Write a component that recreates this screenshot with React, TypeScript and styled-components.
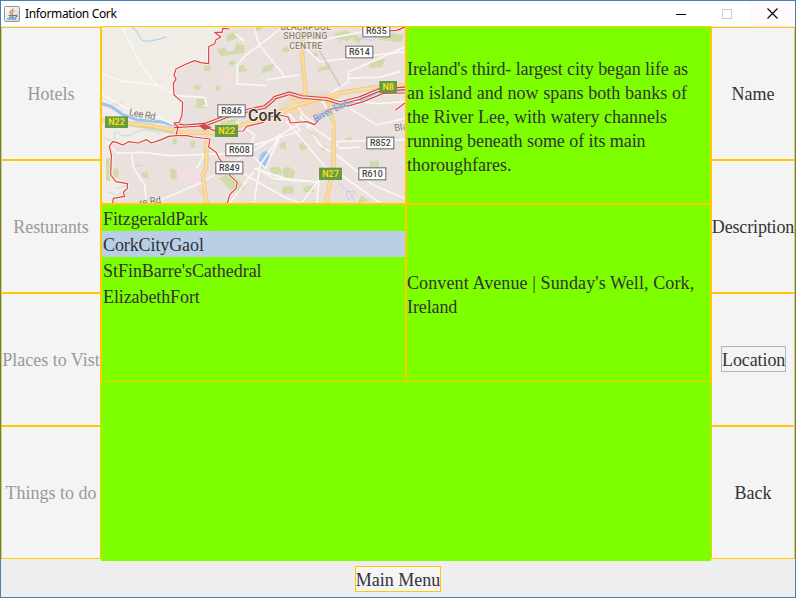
import React from 'react';
import styled, { createGlobalStyle } from 'styled-components';

const GlobalStyle = createGlobalStyle`
  * { box-sizing: border-box; }
  body { margin: 0; }
`;

const Window = styled.div`
  width: 796px;
  height: 598px;
  border: 1px solid #4a7fb5;
  background: #eeeeee;
  display: flex;
  flex-direction: column;
  overflow: hidden;
  font-family: 'Liberation Serif', 'Times New Roman', serif;
  font-size: 18px;
  line-height: 24px;
  color: #333333;
`;

const TitleBar = styled.header`
  height: 25px;
  flex: none;
  display: flex;
  align-items: center;
  background: #ffffff;
  padding-left: 3px;
`;

const Title = styled.h1`
  margin: 0 0 0 5px;
  flex: 1;
  font: 400 12px/24px 'Noto Sans', 'Open Sans', sans-serif;
  letter-spacing: -0.36px;
  color: #000000;
`;

const WindowControl = styled.button<{ $hot?: boolean }>`
  width: ${(p) => (p.$hot ? 45 : 46)}px;
  height: 25px;
  padding: 0;
  border: 0;
  display: flex;
  align-items: center;
  justify-content: center;
  background: ${(p) => (p.$hot ? '#fffafb' : 'transparent')};
`;

const Body = styled.main`
  height: 535px;
  flex: none;
  display: grid;
  grid-template-columns: 100px 610px 84px;
`;

const ButtonColumn = styled.nav`
  display: grid;
  grid-template-rows: repeat(4, 133px);
  border-top: 1px solid #e4e9ef;
`;

const PanelButton = styled.button<{ $spacing?: number }>`
  min-width: 0;
  padding: 1px 0 0;
  border: 1px solid #ffc800;
  background: #f4f4f4;
  color: #333333;
  font: inherit;
  letter-spacing: ${(p) => p.$spacing ?? 0}px;
  white-space: nowrap;
  display: flex;
  align-items: center;
  justify-content: center;

  &:disabled { color: #999999; }
`;

const FocusLabel = styled.span`
  width: 65px;
  height: 26px;
  border: 1px solid #a3b8cc;
  margin: -2px 0 0 1px;
  padding-top: 1px;
  letter-spacing: -0.1px;
`;

const Center = styled.section`
  display: grid;
  grid-template: 178px 178px 179px / 305px 305px;
  background: #7dff00;
`;

const Cell = styled.div`
  border: 1px solid #ffc800;
  overflow: hidden;
`;

const TextCell = styled(Cell)`
  display: flex;
  align-items: center;
  padding-top: 4px;
`;

const Line = styled.span<{ $spacing?: number }>`
  display: block;
  white-space: nowrap;
  letter-spacing: ${(p) => p.$spacing ?? 0}px;
`;

const PlaceList = styled.ul`
  margin: 0;
  padding: 0;
  list-style: none;
`;

const PlaceRow = styled.li<{ $selected?: boolean; $spacing: number }>`
  height: 26px;
  padding: 2px 1px 0;
  letter-spacing: ${(p) => p.$spacing}px;
  background: ${(p) => (p.$selected ? '#b8cfe5' : 'transparent')};
`;

const Footer = styled.footer`
  display: flex;
  justify-content: center;
  padding-top: 5px;
`;

const MenuButton = styled(PanelButton)`
  width: 86px;
  height: 26px;
  padding-top: 2px;
`;

const MapSvg = styled.svg`
  display: block;
  font-family: Roboto, sans-serif;
`;

type Badge = { x: number; y: number; w: number; h: number; label: string };

const regional: Badge[] = [
  { x: 787, y: -4, w: 84, h: 41, label: 'R635' },
  { x: 736, y: 62, w: 84, h: 38, label: 'R614' },
  { x: 352, y: 238, w: 85, h: 39, label: 'R846' },
  { x: 376, y: 355, w: 84, h: 39, label: 'R608' },
  { x: 346, y: 409, w: 84, h: 39, label: 'R849' },
  { x: 799, y: 335, w: 84, h: 38, label: 'R852' },
  { x: 775, y: 427, w: 84, h: 39, label: 'R610' },
];

const national: Badge[] = [
  { x: 15, y: 274, w: 69, h: 35, label: 'N22' },
  { x: 345, y: 300, w: 69, h: 36, label: 'N22' },
  { x: 838, y: 168, w: 53, h: 36, label: 'N8' },
  { x: 657, y: 428, w: 69, h: 37, label: 'N27' },
];

const parks = [
  'M380 30l30-12 2 22-30 10z', 'M350 72l24-4 8 14 22-6 4-22 26 8v22l-72 10z', 'M385 112l18-8 4 12-14 6z',
  'M312 122l18-2 2 18h-20z', 'M280 180l25 2-8 14-18-4z', 'M290 222l29-2-2 28h-28z', 'M415 130l12-14 16 22-26 4z',
  'M350 176l14 16-18 8z', 'M548 72l12-8 12 14-24 6z', 'M490 125l34-10-8 22-34 8z', 'M640 82h12v16h-12z',
  'M655 128l34-10 4 14-38 8z', 'M806 116l50-16-10 26-34 4z', 'M460 6h30l-8 12h-22z',
  'M622 24l40 8-6 10-34-8z', 'M700 26l40-10 22 18-20 14-36-8z', 'M760 26l26 14-8 16-20-10z', 'M838 38l42-14 32 8-10 20-64-8z',
  'M95 292l120 14 10 22-70-14-70-10z', 'M360 292l50-12 8 28-50 6z', 'M680 234l30-14 22 18-38 12z',
  'M218 342l12-6 2 18-14 8z', 'M270 347h15v22h-13z', 'M42 430l14 2v25l-18 2z', 'M124 444l18-4 6 22-22-6z',
  'M210 430l20 4v30l-18-4z', 'M356 458l40-12 40 42-38 16z',
  'M538 357l20-8v25l-18-4z', 'M595 360l14-8 16 14-20 14z', 'M664 360l18 4-6 14-12-4z', 'M510 428l28-4 10 22-36 2z',
  'M548 432l16-8 22 16-6 22-30-4z', 'M807 410l30-4v20l-26 2z', 'M734 340l20-4 4 10-20 4z', 'M610 486l30-6 2 22-32-2z',
  'M782 510l26 18-34 6z', 'M548 484h32v22h-34z', 'M18 400l12 2v66l-12-2z',
];

const minorRoads = [
  'M66 6L122 118 172 182', 'M6 146L70 170 110 172 172 182 224 206', 'M6 208L80 250 180 278 222 300',
  'M232 212L314 218 320 240 310 244', 'M438 90L412 120V176L434 180', 'M408 176L500 182', 'M438 90L478 60 556 156',
  'M462 6L478 60', 'M404 24L432 48', 'M478 60L530 20 550 6', 'M500 164L596 150', 'M566 6L640 50 790 20',
  'M604 60L660 110 915 80', 'M686 210L744 170 746 140 915 66', 'M746 160L840 156 900 140', 'M915 230L830 236 680 220',
  'M20 350L50 384 130 382 210 392 380 386 600 318', 'M94 384L102 430 134 480 138 520', 'M170 530L310 470 420 400 540 330 610 290',
  'M330 360L290 430', 'M408 290L464 330 450 370', 'M456 390L496 430 540 334', 'M540 333L480 420 462 534',
  'M470 430L520 460 618 470', 'M462 430L554 460 656 472', 'M560 290L612 350 680 430', 'M600 270L660 360 730 405 820 480 915 520',
  'M600 280L700 350 915 344', 'M694 340L720 370 780 366', 'M750 250L830 300 915 280', 'M664 222L690 270 700 330',
  'M660 436L650 534', 'M660 460L605 534', 'M724 450L840 534', 'M460 440L390 534', 'M420 440L560 520 600 534',
  'M550 250L580 280 600 320', 'M590 240L610 270 650 300',
];

const mainRed = 'M222 298L254 304 316 299 380 274 450 255 494 246 520 224 524 218 568 205 606 216 680 222 720 234 780 219 834 196 915 190';
const rings = [
  'M388 12L368 10 366 22 344 22 362 36 348 44 344 56 326 65 326 116 302 113 284 107 252 120 228 132 222 150 228 162 220 176 222 210 248 232 246 270 238 292 222 294 234 306 228 332 206 334 184 344 154 354 140 344 114 354 86 350 68 360 50 352 38 350 28 364 34 390 32 450 48 470 82 476 82 490 70 502 74 514 40 520 38 534',
  'M230 332L260 332 280 336 330 342 326 366 348 382 360 404 384 430 390 452 412 472 408 490 390 508 382 534',
  'M222 308L310 303 350 320 430 318 440 304 490 292 510 276 540 270 564 276 572 294 620 290 644 299 652 290 660 270 684 254 748 242 790 230 850 205 915 204',
  'M860 18L890 16 915 6', 'M886 256L915 234',
];

function CorkMap() {
  return (
    <MapSvg width="303" height="176" viewBox="6 6 909 528" role="img" aria-label="Map of Cork">
      <rect x="6" y="6" width="909" height="528" fill="#eae0dd" />
      <path fill="#efede5" d="M6 6H380L366 22 344 22 362 36 326 65 326 116 284 107 228 132 222 150 220 176 222 210 248 232 238 292 234 306 228 332 154 354 114 354 38 350 28 364 32 450 82 476 82 490 38 534H6z" />
      <path fill="#f1dfe1" d="M348 160L400 134 402 164 378 184zM230 438l80-10-4 54-64-20zM712 382h20v40l-20 10z" />
      <path fill="#e3ded5" d="M30 238l40-10-14 16zM540 240l50-42 140 2-40 45-60 20-20 25-50-10z" />
      <path fill="#ecd9c8" d="M536 248l36-28 90-12 42 20-20 26-54 28-14-14-46 6zM288 492l30-14 6 56z" />
      <g fill="#d1dba9">{parks.map((d) => <path key={d} d={d} />)}</g>
      <g fill="none" stroke="#a9cbed" strokeWidth="3">
        <path d="M96 6Q112 16 118 34T150 48 200 36" />
        <path d="M50 320Q70 344 104 324T180 326M12 338l30 12 4-30M20 500l32 10 26-18M102 422l24-1M50 490l30-8" strokeWidth="2" />
        <path d="M710 40l18 16M780 40l38 6 16-12M718 478l28 20 18 30M738 500h28l-20 26z" strokeWidth="2" />
      </g>
      <path d="M6 236L34 245 70 270 110 284 180 290 224 302" fill="none" stroke="#9ac4ef" strokeWidth="9" strokeLinejoin="round" />
      <path d="M648 290L670 262 706 244 786 222 838 200 915 193" fill="none" stroke="#a6d0f4" strokeWidth="13" strokeLinejoin="round" />
      <path d="M477 412C477 390 488 377 500 379 514 381 509 405 503 420 496 433 477 432 477 412z" fill="#a1c3ec" />
      <g fill="none" stroke="#faf7f4" strokeWidth="5" strokeLinejoin="round">
        {minorRoads.map((d) => <path key={d} d={d} />)}
      </g>
      <path d="M658 76L722 186" stroke="#cbc5c2" strokeWidth="4" />
      <g fill="none" strokeLinejoin="round" strokeLinecap="round">
        <g stroke="#e8c58c" strokeWidth="13">
          <path d="M6 286L160 303 250 322 350 324 470 286 530 264 606 236 720 204 840 185 915 181" />
          <path d="M608 6L606 90 612 150 618 208 580 218" />
          <path d="M320 340L318 430 308 450 320 534M688 222L694 275 702 300 700 420 678 534" />
        </g>
        <g stroke="#fadb9b" strokeWidth="9">
          <path d="M6 286L160 303 250 322 350 324 470 286 530 264 606 236 720 204 840 185 915 181" />
          <path d="M608 6L606 90 612 150 618 208 580 218" />
          <path d="M320 340L318 430 308 450 320 534M688 222L694 275 702 300 700 420 678 534" />
          <path d="M556 266L570 240 600 240M620 230L650 214 720 220M530 264L600 258" strokeWidth="6" />
        </g>
        <path d="M626 316l30 22" stroke="#f0d8ba" strokeWidth="7" />
      </g>
      <g fill="none" strokeLinejoin="round">
        <path d={mainRed} stroke="#d9413f" strokeWidth="11" />
        <path d={mainRed} stroke="#f4e8e4" strokeWidth="4" />
        {rings.map((d) => <path key={d} d={d} stroke="#fff6f3" strokeWidth="8" />)}
        {rings.map((d) => <path key={`${d}r`} d={d} stroke="#d94340" strokeWidth="3.6" />)}
        <path d="M296 302l18-7 8 7 14 4-22 10z" fill="#d34c49" />
      </g>
      <g fill="#8b8070" fontSize="26" fontWeight="500" textAnchor="middle" stroke="#f5efeb" strokeWidth="4" paintOrder="stroke">
        <text x="617" y="14" textLength="151">BLACKPOOL</text>
        <text x="616" y="43" textLength="132">SHOPPING</text>
        <text x="617" y="72" textLength="99">CENTRE</text>
      </g>
      <g fill="#77736f" fontSize="29" stroke="#f3eee9" strokeWidth="4" paintOrder="stroke">
        <text transform="translate(86 270) rotate(11)" textLength="80">Lee Rd</text>
        <text transform="translate(119 543) rotate(-8)" textLength="66">re Rd</text>
        <text transform="translate(884 319) rotate(-9)">Blackrock</text>
      </g>
      <text transform="translate(646 291) rotate(-27)" textLength="112" fill="#6788bd" fontSize="28" stroke="#d2e2f2" strokeWidth="2" paintOrder="stroke">River Lee</text>
      <text x="444" y="289" textLength="100" lengthAdjust="spacingAndGlyphs" fill="#40362f" fontSize="48" fontWeight="500" stroke="#fbf1e8" strokeWidth="5" paintOrder="stroke">Cork</text>
      {regional.map((b) => (
        <g key={b.label}>
          <rect x={b.x + 1.5} y={b.y + 1.5} width={b.w - 3} height={b.h - 3} fill="#ffffff" stroke="#656565" strokeWidth="3" />
          <text x={b.x + b.w / 2} y={b.y + b.h / 2 + 10} textAnchor="middle" fill="#444444" fontSize="28" fontWeight="500" textLength="62" lengthAdjust="spacingAndGlyphs">{b.label}</text>
        </g>
      ))}
      {national.map((b) => (
        <g key={`${b.label}-${b.x}`}>
          <rect x={b.x} y={b.y} width={b.w} height={b.h} fill="#669b43" />
          <text x={b.x + b.w / 2} y={b.y + b.h / 2 + 9} textAnchor="middle" fill="#f8dc1b" fontSize="27" fontWeight="700" textLength={b.w - 19} lengthAdjust="spacingAndGlyphs">{b.label}</text>
        </g>
      ))}
    </MapSvg>
  );
}

function JavaIcon() {
  return (
    <svg width="16" height="16" viewBox="0 0 16 16" aria-hidden="true">
      <defs>
        <linearGradient id="tile" x2="1" y2="1">
          <stop offset="0" stopColor="#fff" />
          <stop offset="1" stopColor="#ccd4dc" />
        </linearGradient>
      </defs>
      <rect x=".5" y=".5" width="15" height="15" rx="1" fill="url(#tile)" stroke="#8b98a5" />
      <path d="M9 2.5C9 4.5 5.5 5 6 6.5 6.2 7.3 7 7.8 7.5 8.5M10.5 4.5C8.5 5.5 7.5 6 8.5 7.2 9 8 8.3 8.4 8 8.7" fill="none" stroke="#ec8b31" strokeWidth="1.3" />
      <path d="M4.5 9.5H11M5.3 11.2H10M3 13H12M11 9.5c2.5-.8 2.4 1.5 0 2" fill="none" stroke="#527ba3" strokeWidth="1.2" />
    </svg>
  );
}

const categories = [
  { label: 'Hotels' },
  { label: 'Resturants', spacing: -0.05 },
  { label: 'Places to Vist' },
  { label: 'Things to do' },
];

const places = [
  { name: 'FitzgeraldPark', spacing: -0.08 },
  { name: 'CorkCityGaol', spacing: -0.1 },
  { name: "StFinBarre'sCathedral", spacing: -0.03 },
  { name: 'ElizabethFort', spacing: -0.1 },
];

const description = [
  { text: "Ireland's third- largest city began life as", spacing: -0.09 },
  { text: 'an island and now spans both banks of', spacing: 0.07 },
  { text: 'the River Lee, with watery channels', spacing: 0 },
  { text: 'running beneath some of its main', spacing: -0.06 },
  { text: 'thoroughfares.', spacing: 0 },
];

export default function App() {
  return (
    <Window>
      <GlobalStyle />
      <TitleBar>
        <JavaIcon />
        <Title>Information Cork</Title>
        <WindowControl aria-label="Minimize">
          <svg width="10" height="10" shapeRendering="crispEdges"><path d="M0 5.5H10" stroke="#000" /></svg>
        </WindowControl>
        <WindowControl aria-label="Maximize" disabled>
          <svg width="10" height="10" shapeRendering="crispEdges"><path d="M.5 .5H9.5V9.5H.5Z" fill="none" stroke="#ccc" /></svg>
        </WindowControl>
        <WindowControl aria-label="Close" $hot>
          <svg width="11" height="11"><path d="M.5 .5L10.5 10.5M10.5 .5L.5 10.5" stroke="#000" strokeWidth="1.1" /></svg>
        </WindowControl>
      </TitleBar>
      <Body>
        <ButtonColumn>
          {categories.map((c) => (
            <PanelButton key={c.label} disabled $spacing={c.spacing}>{c.label}</PanelButton>
          ))}
        </ButtonColumn>
        <Center>
          <Cell><CorkMap /></Cell>
          <TextCell>
            <div>{description.map((l) => <Line key={l.text} $spacing={l.spacing}>{l.text}</Line>)}</div>
          </TextCell>
          <Cell>
            <PlaceList>
              {places.map((p) => (
                <PlaceRow key={p.name} $selected={p.name === 'CorkCityGaol'} $spacing={p.spacing}>{p.name}</PlaceRow>
              ))}
            </PlaceList>
          </Cell>
          <TextCell>
            <div>
              <Line $spacing={0.11}>Convent Avenue | Sunday's Well, Cork,</Line>
              <Line $spacing={-0.1}>Ireland</Line>
            </div>
          </TextCell>
        </Center>
        <ButtonColumn>
          <PanelButton>Name</PanelButton>
          <PanelButton $spacing={-0.15}>Description</PanelButton>
          <PanelButton><FocusLabel>Location</FocusLabel></PanelButton>
          <PanelButton>Back</PanelButton>
        </ButtonColumn>
      </Body>
      <Footer>
        <MenuButton>Main Menu</MenuButton>
      </Footer>
    </Window>
  );
}
